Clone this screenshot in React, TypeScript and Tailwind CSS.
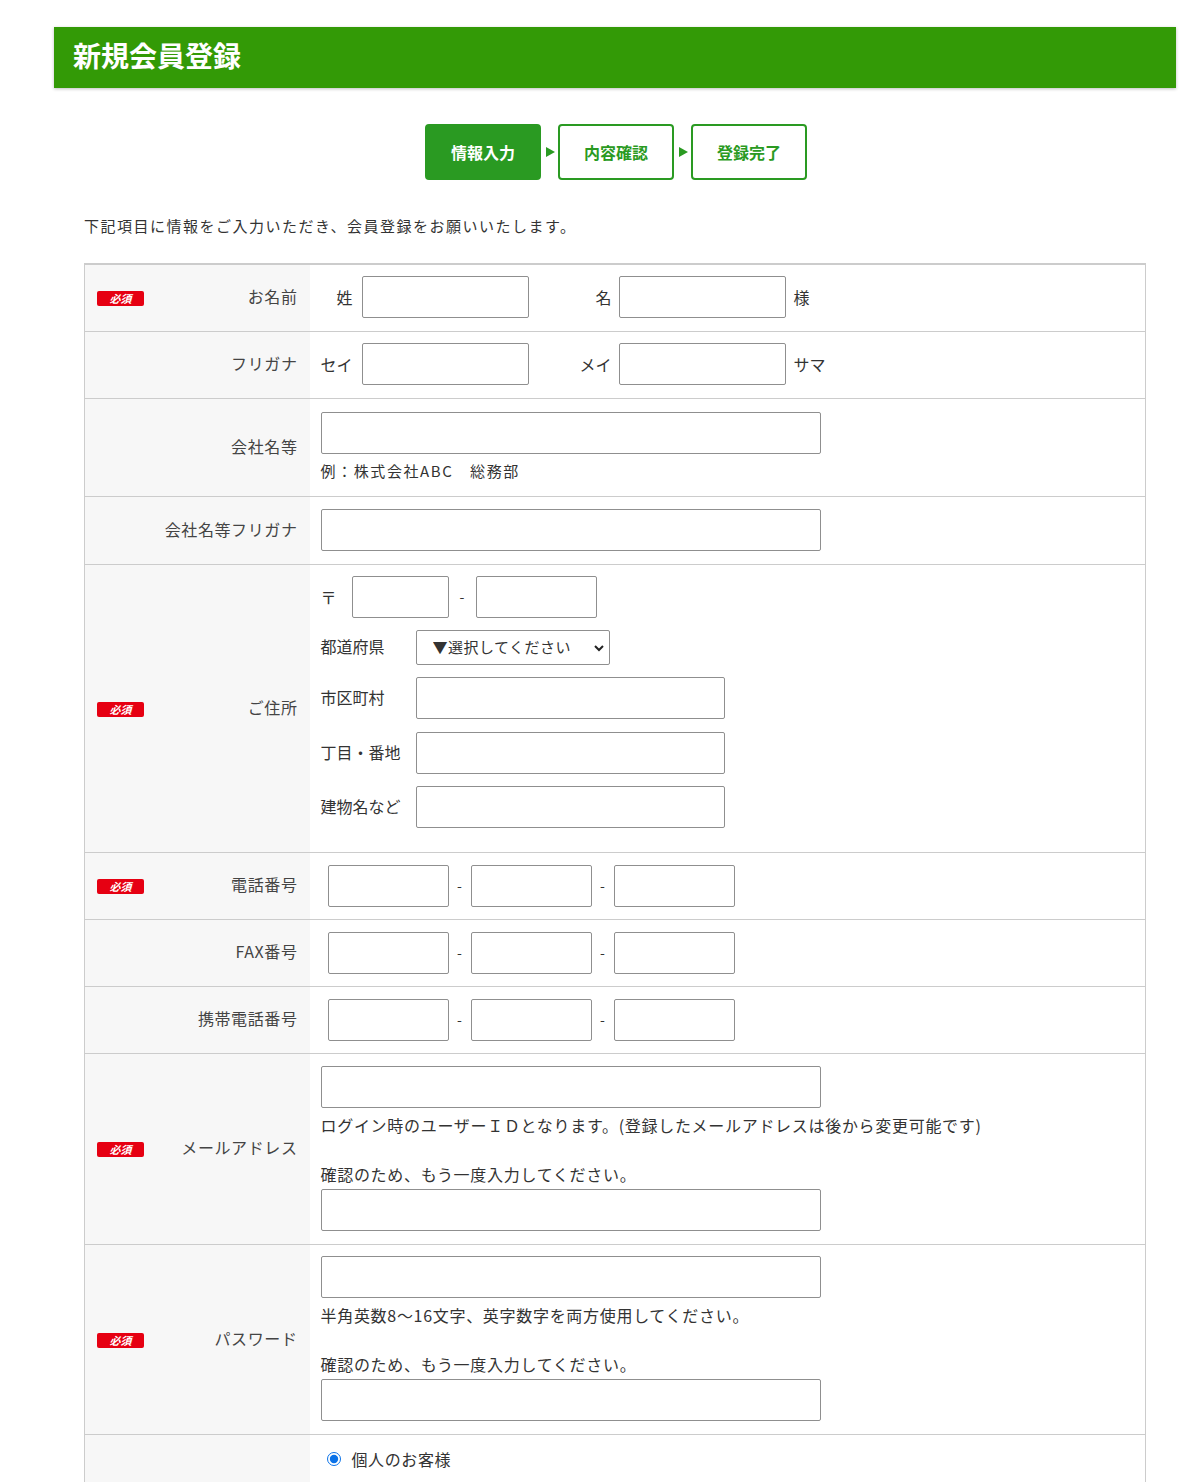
import React from 'react';

const font = { fontFamily: '"Noto Sans CJK JP", "Noto Sans", sans-serif' };

const Badge = () => (
  <span className="inline-flex h-[15px] w-[47px] items-center justify-center rounded-[2px] bg-[#e60012] text-[11px] font-bold italic leading-none text-white">
    必須
  </span>
);

const TextInput = ({ className = '' }: { className?: string }) => (
  <input
    type="text"
    className={`h-[42px] rounded-[2px] border border-[#8f8f8f] bg-white px-2 text-[15px] outline-none ${className}`}
  />
);

const Row = ({
  label,
  required,
  children,
}: {
  label: string;
  required?: boolean;
  children: React.ReactNode;
}) => (
  <tr className="border-b border-[#cccccc]">
    <th className="w-[225px] bg-[#f7f7f7] pl-[12px] pr-[12px] align-middle font-normal">
      <div className="flex items-center justify-between">
        <span className="-mt-[3px]">{required ? <Badge /> : null}</span>
        <span className="-mt-[3px] text-[16px] tracking-[0.6px] text-[#444]">{label}</span>
      </div>
    </th>
    <td className="bg-white pl-[11px] pr-4 align-middle">{children}</td>
  </tr>
);

const Dash = () => <span className="w-[22px] text-center text-[14px] text-[#333]">-</span>;

const Step = ({ label, active }: { label: string; active?: boolean }) => (
  <div
    className={`flex h-[56px] w-[116px] items-center justify-center rounded-[4px] border-2 border-[#2a9a22] text-[16px] font-bold ${
      active ? 'bg-[#2a9a22] text-white' : 'bg-white text-[#2a9a22]'
    }`}
  >
    {label}
  </div>
);

const Arrow = () => (
  <svg width="17" height="12" viewBox="0 0 17 12" className="shrink-0">
    <polygon points="5,1 14,6 5,11" fill="#2a9a22" />
  </svg>
);

export default function App() {
  return (
    <div className="min-h-screen bg-white text-[#333]" style={font}>
      <div className="ml-[54px] w-[1122px] pt-[27px] pb-10">
        <div className="flex h-[61px] items-center bg-[#339a06] pb-[5px] pl-[19px] shadow-[0_1px_3px_rgba(0,0,0,0.25)]">
          <h1 className="text-[28px] font-bold text-white">新規会員登録</h1>
        </div>

        <div className="mt-[36px] flex items-center justify-center gap-0 pl-[2px]">
          <Step label="情報入力" active />
          <Arrow />
          <Step label="内容確認" />
          <Arrow />
          <Step label="登録完了" />
        </div>

        <div className="mx-[30px]">
          <p className="mt-[35px] text-[15px] tracking-[1.5px] text-[#333]">
            下記項目に情報をご入力いただき、会員登録をお願いいたします。
          </p>

          <table className="mt-[25px] w-[1062px] border-collapse border border-t-2 border-[#cccccc]">
            <tbody>
              <Row label="お名前" required>
                <div className="flex h-[66px] items-center pb-[2px] text-[16px]">
                  <span className="w-[41px] pl-[16px]">姓</span>
                  <TextInput className="w-[167px]" />
                  <span className="w-[90px] pr-[7px] text-right">名</span>
                  <TextInput className="w-[167px]" />
                  <span className="pl-[8px]">様</span>
                </div>
              </Row>
              <Row label="フリガナ">
                <div className="flex h-[66px] items-center pb-[2px] text-[16px]">
                  <span className="w-[41px]">セイ</span>
                  <TextInput className="w-[167px]" />
                  <span className="w-[90px] pr-[7px] text-right">メイ</span>
                  <TextInput className="w-[167px]" />
                  <span className="pl-[8px]">サマ</span>
                </div>
              </Row>
              <Row label="会社名等">
                <div className="flex h-[97px] flex-col justify-center">
                  <TextInput className="w-[500px]" />
                  <p className="mt-[6px] text-[15px] tracking-[1.6px]">例：株式会社ABC　総務部</p>
                </div>
              </Row>
              <Row label="会社名等フリガナ">
                <div className="flex h-[67px] items-center">
                  <TextInput className="w-[500px]" />
                </div>
              </Row>
              <Row label="ご住所" required>
                <div className="flex h-[287px] flex-col pt-[11px] text-[16px]">
                  <div className="flex items-center">
                    <span className="w-[31px]">〒</span>
                    <TextInput className="w-[97px]" />
                    <span className="w-[27px] text-center text-[14px] text-[#333]">-</span>
                    <TextInput className="w-[121px]" />
                  </div>
                  <div className="mt-[12px] flex items-center">
                    <span className="w-[95px] -mt-[2px]">都道府県</span>
                    <div className="relative">
                      <select className="h-[35px] w-[194px] appearance-none rounded-[2px] border border-[#8f8f8f] bg-white pl-[16px] text-[15px] tracking-[0.5px] text-[#333] outline-none">
                        <option>▼選択してください</option>
                      </select>
                      <svg
                        width="12"
                        height="12"
                        viewBox="0 0 12 12"
                        className="pointer-events-none absolute right-[5px] top-[12px]"
                      >
                        <path d="M2 4 L6 8 L10 4" stroke="#222" strokeWidth="2" fill="none" />
                      </svg>
                    </div>
                  </div>
                  <div className="mt-[12px] flex items-center">
                    <span className="w-[95px] -mt-[2px]">市区町村</span>
                    <TextInput className="w-[309px]" />
                  </div>
                  <div className="mt-[13px] flex items-center">
                    <span className="w-[95px] -mt-[2px]">丁目・番地</span>
                    <TextInput className="w-[309px]" />
                  </div>
                  <div className="mt-[12px] flex items-center">
                    <span className="w-[95px] -mt-[2px]">建物名など</span>
                    <TextInput className="w-[309px]" />
                  </div>
                </div>
              </Row>
              {[
                { label: '電話番号', required: true },
                { label: 'FAX番号' },
                { label: '携帯電話番号' },
              ].map((r) => (
                <Row key={r.label} label={r.label} required={r.required}>
                  <div className="flex h-[66px] items-center pl-[7px]">
                    <TextInput className="w-[121px]" />
                    <Dash />
                    <TextInput className="w-[121px]" />
                    <Dash />
                    <TextInput className="w-[121px]" />
                  </div>
                </Row>
              ))}
              <Row label="メールアドレス" required>
                <div className="flex h-[190px] flex-col pt-[12px] text-[16px] tracking-[0.7px]">
                  <TextInput className="w-[500px]" />
                  <p className="mt-[5px]">
                    ログイン時のユーザーＩＤとなります。(登録したメールアドレスは後から変更可能です)
                  </p>
                  <p className="mt-[25px]">確認のため、もう一度入力してください。</p>
                  <TextInput className="mt-[3px] w-[500px]" />
                </div>
              </Row>
              <Row label="パスワード" required>
                <div className="flex h-[189px] flex-col pt-[11px] text-[16px] tracking-[0.7px]">
                  <TextInput className="w-[500px]" />
                  <p className="mt-[5px]">半角英数8～16文字、英字数字を両方使用してください。</p>
                  <p className="mt-[25px]">確認のため、もう一度入力してください。</p>
                  <TextInput className="mt-[3px] w-[500px]" />
                </div>
              </Row>
              <Row label="">
                <div className="flex h-[60px] items-start pt-[12px] text-[16px] tracking-[0.6px]">
                  <label className="flex items-center gap-[11px] pl-[6px]">
                    <input type="radio" defaultChecked className="h-[14px] w-[14px] accent-[#0a72e8]" />
                    <span>個人のお客様</span>
                  </label>
                </div>
              </Row>
            </tbody>
          </table>
        </div>
      </div>
    </div>
  );
}
